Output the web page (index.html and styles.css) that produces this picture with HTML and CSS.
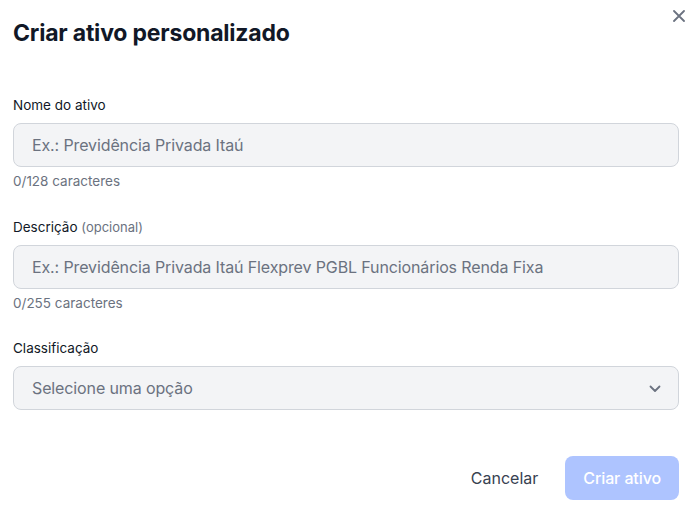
FILE: index.html
```html
<!DOCTYPE html>
<html lang="pt-BR">
<head>
    <meta charset="UTF-8">
    <meta name="viewport" content="width=device-width, initial-scale=1.0">
    <link rel="stylesheet" href="styles.css">
</head>
<body>

    <div class="modal">
        <button class="close-button" aria-label="Fechar">
            <svg width="12" height="12" viewBox="0 0 12 12" fill="none">
                <path d="M1 1L11 11M11 1L1 11" stroke="#6b7280" stroke-width="1.8" stroke-linecap="round"/>
            </svg>
        </button>

        <h1 class="modal-title">Criar ativo personalizado</h1>

        <form class="form">
            <div class="field">
                <label class="field-label">Nome do ativo</label>
                <input class="field-input" type="text" placeholder="Ex.: Previdência Privada Itaú">
                <span class="field-hint">0/128 caracteres</span>
            </div>

            <div class="field">
                <label class="field-label">Descrição <span class="optional">(opcional)</span></label>
                <input class="field-input" type="text" placeholder="Ex.: Previdência Privada Itaú Flexprev PGBL Funcionários Renda Fixa">
                <span class="field-hint">0/255 caracteres</span>
            </div>

            <div class="field">
                <label class="field-label">Classificação</label>
                <div class="field-input select">
                    <span>Selecione uma opção</span>
                    <svg width="12" height="8" viewBox="0 0 12 8" fill="none">
                        <path d="M1.5 1.5L6 6L10.5 1.5" stroke="#6b7280" stroke-width="1.8" stroke-linecap="round" stroke-linejoin="round"/>
                    </svg>
                </div>
            </div>

            <div class="actions">
                <button type="button" class="cancel-button">Cancelar</button>
                <button type="button" class="submit-button" disabled>Criar ativo</button>
            </div>
        </form>
    </div>

</body>
</html>
```

FILE: styles.css
```css
body {
    margin: 0;
    font-family: 'Inter', 'Liberation Sans', sans-serif;
    background-color: #fff;
    color: #111827;
}

.modal {
    position: relative;
    padding: 19px 14px 10px 13px;
}

.close-button {
    position: absolute;
    top: 9px;
    right: 7px;
    width: 14px;
    height: 14px;
    padding: 0;
    border: none;
    background: none;
    display: flex;
    align-items: center;
    justify-content: center;
    cursor: pointer;
}

.modal-title {
    margin: 0;
    font-size: 23px;
    line-height: 28px;
    font-weight: 700;
    letter-spacing: -0.2px;
    color: #111827;
}

.form {
    margin-top: 48px;
    display: flex;
    flex-direction: column;
}

.field {
    display: flex;
    flex-direction: column;
    margin-bottom: 25px;
}

.field + .field {
    margin-top: 0.5px;
}

.field-label {
    font-size: 13.5px;
    line-height: 20px;
    color: #111827;
    margin-bottom: 8px;
}

.optional {
    font-size: 13px;
    color: #6b7280;
}

.field-input {
    box-sizing: border-box;
    height: 44px;
    width: 100%;
    padding: 0 18px;
    border: 1px solid #d1d5db;
    border-radius: 8px;
    background-color: #f3f4f6;
    font-family: inherit;
    font-size: 16px;
    letter-spacing: -0.12px;
    color: #111827;
    outline: none;
}

.field-input::placeholder {
    color: #6b7280;
}

.select {
    display: flex;
    align-items: center;
    justify-content: space-between;
    color: #6b7280;
    padding-right: 17px;
}

.select svg {
    margin-top: 2px;
}

.field-hint {
    margin-top: 4px;
    font-size: 13.5px;
    line-height: 20px;
    color: #6b7280;
}

.actions {
    display: flex;
    justify-content: flex-end;
    align-items: center;
    gap: 27px;
    margin-top: 21px;
}

.cancel-button,
.submit-button {
    font-family: inherit;
    font-size: 16px;
    height: 44px;
    border: none;
    border-radius: 8px;
    cursor: pointer;
}

.cancel-button {
    background: none;
    color: #374151;
    font-weight: 400;
    padding: 0;
}

.submit-button {
    background-color: #aec4ff;
    color: #fff;
    font-weight: 500;
    letter-spacing: -0.1px;
    padding: 0 18px;
}

.submit-button:disabled {
    cursor: not-allowed;
}
```
